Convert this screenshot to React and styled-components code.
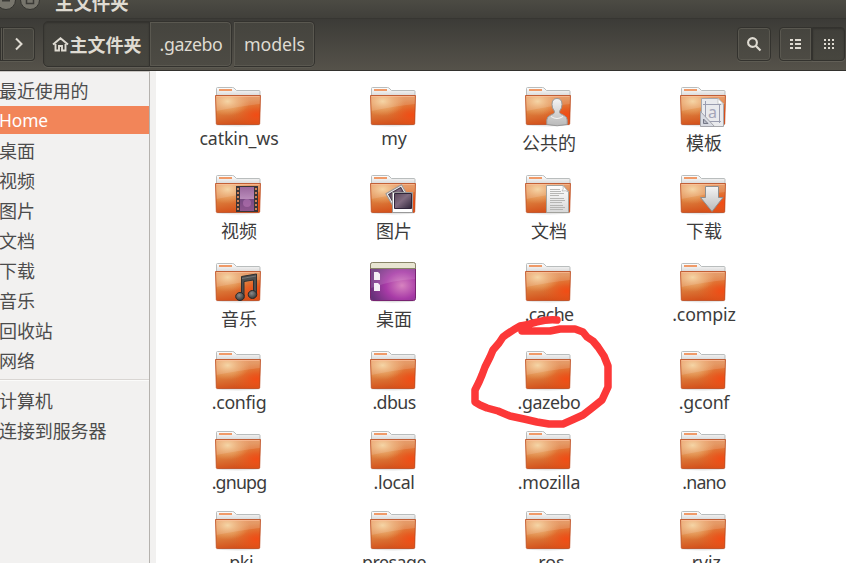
import React from 'react';
import styled, { createGlobalStyle, css } from 'styled-components';

const GlobalStyle = createGlobalStyle`
  * { box-sizing: border-box; }
  body {
    margin: 0;
    overflow: hidden;
    font-family: "Noto Sans", "Noto Sans CJK SC", sans-serif;
    font-size: 18px;
    color: #3c3c3c;
  }
`;

const Window = styled.div`
  position: relative;
  display: flex;
  flex-direction: column;
  width: 846px;
  height: 563px;
  overflow: hidden;
  background: #fff;
`;

const TitleBar = styled.header`
  display: flex;
  align-items: flex-end;
  flex: none;
  height: 18px;
  background: linear-gradient(#4c4b44, #403f3a);
`;

const WindowControls = styled.svg`
  display: block;
  flex: none;
  width: 55px;
  height: 18px;
`;

const Title = styled.h1`
  margin: 0 0 4px;
  font: bold 18.4px/24px "Noto Sans CJK SC", sans-serif;
  color: #dfdbd2;
`;

const Toolbar = styled.nav`
  display: flex;
  align-items: center;
  flex: none;
  height: 53px;
  padding: 0 1px 2px 0;
  background: linear-gradient(#3c3b37, #55524a);
  border-top: 1px solid #373632;
  border-bottom: 1px solid #33322e;
`;

const buttonFace = css`
  display: flex;
  align-items: center;
  justify-content: center;
  border: 1px solid #33322e;
  color: #dfdbd2;
  background: ${(p) => (p.$pressed ? 'linear-gradient(#403f3a, #47463f)' : 'linear-gradient(#45443e, #4d4b44)')};
  box-shadow: ${(p) =>
    p.$pressed ? 'inset 0 1px 2px rgba(0,0,0,.22), 0 1px 0 #625f57' : 'inset 0 0 0 1px #5a5850, 0 1px 0 #5d5b52'};
`;

const ToolButton = styled.button`
  ${buttonFace}
  flex: none;
  width: ${(p) => p.$width}px;
  height: 34px;
  padding: 0;
  border-radius: ${(p) => p.$radius || '4px'};
  border-left-width: ${(p) => (p.$joined ? 0 : 1)}px;
`;

const Breadcrumbs = styled.div`
  display: flex;
  flex: 1;
  margin-left: 8px;
`;

const Crumb = styled.button`
  ${buttonFace}
  gap: 1px;
  width: ${(p) => p.$width}px;
  height: 46px;
  margin-right: ${(p) => p.$gap || 0}px;
  padding: 1px 0 0 ${(p) => (p.$pressed ? 0 : 1)}px;
  border-radius: ${(p) => p.$radius};
  border-left-width: ${(p) => (p.$joined ? 0 : 1)}px;
  font-family: "Noto Sans", "Noto Sans CJK SC", sans-serif;
  font-size: ${(p) => (p.$pressed ? 18 : 17.8)}px;
  font-weight: ${(p) => (p.$pressed ? 700 : 400)};
  letter-spacing: ${(p) => p.$spacing || 0}px;
`;

const ViewSwitch = styled.div`
  display: flex;
  margin-left: 8px;
`;

const Body = styled.div`
  display: flex;
  flex: 1;
  min-height: 0;
`;

const Sidebar = styled.aside`
  flex: none;
  width: 150px;
  padding-top: 4px;
  background: #f2f1f0;
  border-top: 1px solid #c9c6c2;
  border-right: 1px solid #b5b2ae;
`;

const Place = styled.div`
  height: ${(p) => (p.$selected ? 28 : 30)}px;
  margin-bottom: ${(p) => (p.$selected ? 2 : 0)}px;
  line-height: ${(p) => (p.$selected ? 28 : 30)}px;
  font-size: ${(p) => (p.$selected ? 17.4 : 18)}px;
  letter-spacing: -0.1px;
  text-indent: -1px;
  color: ${(p) => (p.$selected ? '#fff' : '#4c4c4c')};
  background: ${(p) => (p.$selected ? '#f28559' : 'none')};
  white-space: nowrap;
`;

const Divider = styled.hr`
  height: 2px;
  margin: 3px 0 5px;
  border: 0;
  border-top: 1px solid #d9d6d3;
  border-bottom: 1px solid #fbfbfa;
`;

const Gutter = styled.div`
  flex: none;
  width: 6px;
  background: #f2f1f0;
`;

const Files = styled.main`
  display: grid;
  grid-template-columns: repeat(4, 155px);
  grid-template-rows: 88px 88px 88px 80px 80px 80px;
  padding: 15px 0 0 5px;
  overflow: hidden;
`;

const FileItem = styled.figure`
  display: flex;
  flex-direction: column;
  align-items: center;
  margin: 0;
`;

const FileLabel = styled.figcaption`
  height: 26px;
  margin-top: ${(p) => (p.$cjk ? 2 : -3)}px;
  padding-left: 1px;
  font-size: ${(p) => (p.$cjk ? 18 : 17.8)}px;
  line-height: 26px;
  letter-spacing: ${(p) => p.$spacing || 0}px;
  white-space: nowrap;
`;

const FolderSvg = styled.svg`
  display: block;
  flex: none;
  width: 47px;
  height: 42px;
  overflow: visible;
`;

const Glyph = styled.svg`
  display: block;
  flex: none;
`;

const Annotation = styled.svg`
  position: absolute;
  left: 0;
  top: 0;
  pointer-events: none;
`;

const Gradients = () => (
  <Annotation width="0" height="0">
    <defs>
      <linearGradient id="front" x1="0.3" y1="0" x2="0.5" y2="1">
        <stop offset="0" stopColor="#e5915c" />
        <stop offset="0.5" stopColor="#dd8240" />
        <stop offset="1" stopColor="#d34d18" />
      </linearGradient>
      <radialGradient id="hot" cx="0.92" cy="0.68" r="0.55">
        <stop offset="0" stopColor="#f24c14" />
        <stop offset="0.3" stopColor="#ec5018" stopOpacity="0.75" />
        <stop offset="1" stopColor="#e55c1c" stopOpacity="0" />
      </radialGradient>
      <radialGradient id="glow" cx="0.27" cy="0.2" r="0.5">
        <stop offset="0" stopColor="#f4d09a" />
        <stop offset="1" stopColor="#efa868" stopOpacity="0" />
      </radialGradient>
      <linearGradient id="paper" x1="0" y1="0" x2="0" y2="1">
        <stop offset="0" stopColor="#fff" />
        <stop offset="1" stopColor="#d8d8d8" />
      </linearGradient>
      <linearGradient id="silver" x1="0" y1="0" x2="0" y2="1">
        <stop offset="0" stopColor="#f4f4f4" />
        <stop offset="1" stopColor="#b9b9b9" />
      </linearGradient>
      <linearGradient id="photo" x1="0" y1="0" x2="1" y2="1">
        <stop offset="0" stopColor="#5a4658" />
        <stop offset="0.45" stopColor="#806b80" />
        <stop offset="1" stopColor="#30263b" />
      </linearGradient>
      <linearGradient id="film" x1="0" y1="0" x2="0" y2="1">
        <stop offset="0" stopColor="#9b679d" />
        <stop offset="0.48" stopColor="#b88bb9" />
        <stop offset="0.52" stopColor="#794a83" />
        <stop offset="1" stopColor="#90568f" />
      </linearGradient>
      <radialGradient id="desk" cx="0.7" cy="0.6" r="0.72">
        <stop offset="0" stopColor="#d783c0" />
        <stop offset="0.5" stopColor="#a83ba7" />
        <stop offset="1" stopColor="#673179" />
      </radialGradient>
      <radialGradient id="note" cx="0.4" cy="0.35" r="0.7">
        <stop offset="0" stopColor="#8a8a8a" />
        <stop offset="1" stopColor="#333" />
      </radialGradient>
    </defs>
  </Annotation>
);

const emblems = {
  person: (
    <g fill="url(#silver)" stroke="#999" strokeWidth="1">
      <path d="M21.800 38.500V34q0-3.500 4-5l3-1.500q1-.8.500-2.500-2.300-3-2.300-6.500 0-6 5-6t5 6q0 3.500-2.300 6.500-.5 1.700.5 2.500l3 1.500q4 1.500 4 5v4.500q-10 2.500-20.400 0Z" />
      <path d="M26 30.500q6 4 12 0" fill="none" stroke="#f5f5f5" />
    </g>
  ),
  template: (
    <g>
      <path d="M21.500 12.500H38l5.500 5.500v22.500h-22Z" fill="#e9eaed" stroke="#a7a8ac" />
      <path d="M38 12.500v5.500h5.500Z" fill="#fff" stroke="#bbb" strokeWidth=".7" />
      <path d="M25.500 15v22M39.500 18v19M23 18.500h18M23 35.500h18" stroke="#9a9db0" fill="none" />
      <text x="28" y="32" fontFamily="Noto Sans" fontSize="16" fill="#a4a6b9">a</text>
      <path d="M20.500 25.500v15h14Z" fill="#d8dbe3" stroke="#a3a4ab" />
      <path d="M23.500 33v4.500h4.500Z" fill="#b7bac7" stroke="#747887" />
    </g>
  ),
  film: (
    <g>
      <path d="M21 12h22v26H21Z" fill="#3b3537" />
      <path d="M25 13h14v24H25Z" fill="url(#film)" />
      <path d="M23 14v23M41 14v23" stroke="#cf8158" strokeWidth="2" strokeDasharray="2 2" />
      <circle cx="32" cy="29" r="4" fill="#d18acb" opacity=".4" />
    </g>
  ),
  photos: (
    <g>
      <g transform="rotate(-30 27 22)">
        <path d="M18.500 14.500h18v19h-18Z" fill="#f3f3f3" stroke="#999" />
        <path d="M20.500 16.500h14v13h-14Z" fill="url(#photo)" stroke="#46394a" />
      </g>
      <path d="M22.500 18.500h20v20h-20Z" fill="#fff" stroke="#999" />
      <path d="M24.500 19.500h17v15h-17Z" fill="url(#photo)" stroke="#30263b" />
    </g>
  ),
  document: (
    <g>
      <path d="M21.500 11.500h16.500l5.500 6v21h-22Z" fill="url(#paper)" stroke="#a2a29d" />
      <path d="M38 11.500q1 4-1 5.500 4-1 6.500 1Z" fill="#fff" stroke="#aaa" strokeWidth=".7" />
      <path d="M25 15.500h10M25 17.500h11M25 19.500h14M25 21.500h9M25 24.500h14M25 26.500h15M25 28.500h12M25 31.500h13M25 33.500h15M25 35.500h13" stroke="#b0b0ae" strokeWidth=".9" />
    </g>
  ),
  download: (
    <path d="M25.500 12.500h13v11h4.500L32 37.500 20.500 23.500h5Z" fill="url(#silver)" stroke="#8e8e8e" strokeLinejoin="round" />
  ),
  music: (
    <g>
      <path d="M26.500 14.500l15-2.500v19h-3V18l-9.500 1.500V34h-2.500Z" fill="#4f4f4f" stroke="#303030" />
      <ellipse cx="25" cy="34.500" rx="4.300" ry="4" fill="url(#note)" stroke="#292929" />
      <ellipse cx="37.500" cy="32.500" rx="4.300" ry="4" fill="url(#note)" stroke="#292929" />
      <path d="M27 16.500l14-2.500" stroke="#777" />
    </g>
  ),
};

const FolderIcon = ({ emblem }) => (
  <FolderSvg viewBox="0 0 47 42" aria-hidden="true">
    <ellipse cx="23" cy="39" rx="22" ry="1.400" fill="#000" opacity=".1" />
    <path d="M1.500 10V2.500q0-1 1-1h15q1.500 0 2.500 1.500l1.500 1.500H44q1 0 1 1V10Z" fill="url(#paper)" stroke="#b9bdbd" />
    <path d="M4 3h13v2H4Z" fill="#f09a68" />
    <path d="M.5 9.500h45l-.8 28.200q0 .8-1 .8H2.300q-1 0-1-.8Z" fill="url(#front)" />
    <path d="M.5 9.500h45l-.8 28.200q0 .8-1 .8H2.300q-1 0-1-.8Z" fill="url(#hot)" />
    <path d="M.5 9.500h45l-.8 28.200q0 .8-1 .8H2.300q-1 0-1-.8Z" fill="url(#glow)" />
    <path d="M1 10h44v8Q25 20 1.500 25Z" fill="#fff" opacity=".13" />
    <path d="M1.500 10.500h43" stroke="#ffc5a0" opacity=".6" />
    <path d="M.5 9.500h45l-.8 28.200q0 .8-1 .8H2.300q-1 0-1-.8Z" fill="none" stroke="#b84418" opacity=".75" />
    {emblem && emblems[emblem]}
  </FolderSvg>
);

const DesktopIcon = () => (
  <FolderSvg viewBox="0 0 47 42" aria-hidden="true">
    <ellipse cx="23" cy="39" rx="22" ry="1.400" fill="#000" opacity=".12" />
    <rect x=".5" y="1" width="45" height="37.500" rx="2" fill="url(#desk)" stroke="#782371" />
    <path d="M1 7h44v10Q22 18 1 26Z" fill="#fff" opacity=".12" />
    <path d="M.5 6.500V2.500q0-2 2-2h41q2 0 2 2v4Z" fill="#e8e5d2" stroke="#888567" />
    <path d="M4 10h4l2 2v6H4ZM4 21h4l2 2v6H4Z" fill="#f4edf4" />
  </FolderSvg>
);

const places = ['最近使用的', 'Home', '桌面', '视频', '图片', '文档', '下载', '音乐', '回收站', '网络'];
const devices = ['计算机', '连接到服务器'];

const files = [
  { name: 'catkin_ws', spacing: -0.15 },
  { name: 'my', spacing: -0.2 },
  { name: '公共的', cjk: true, emblem: 'person' },
  { name: '模板', cjk: true, emblem: 'template' },
  { name: '视频', cjk: true, emblem: 'film' },
  { name: '图片', cjk: true, emblem: 'photos' },
  { name: '文档', cjk: true, emblem: 'document' },
  { name: '下载', cjk: true, emblem: 'download' },
  { name: '音乐', cjk: true, emblem: 'music' },
  { name: '桌面', cjk: true, desktop: true },
  { name: '.cache', spacing: -0.7 },
  { name: '.compiz', spacing: -0.15 },
  { name: '.config', spacing: -0.3 },
  { name: '.dbus', spacing: -0.6 },
  { name: '.gazebo', spacing: -0.4 },
  { name: '.gconf', spacing: -0.3 },
  { name: '.gnupg', spacing: -0.8 },
  { name: '.local', spacing: -0.4 },
  { name: '.mozilla', spacing: -0.2 },
  { name: '.nano', spacing: -0.8 },
  { name: '.pki', spacing: -0.3 },
  { name: 'presage', spacing: -0.5 },
  { name: '.ros', spacing: -0.1 },
  { name: '.rviz', spacing: -0.1 },
];

export default function App() {
  return (
    <Window>
      <GlobalStyle />
      <Gradients />
      <TitleBar>
        <WindowControls viewBox="0 0 55 18">
          <circle cx="6" cy="0" r="9.500" fill="#77756c" stroke="#34332f" />
          <path d="M2 0.500h8" stroke="#3b3a36" strokeWidth="2" />
          <circle cx="30" cy="0" r="9.500" fill="#77756c" stroke="#34332f" />
          <path d="M26.500-3.500h7v7h-7Z" fill="none" stroke="#3b3a36" strokeWidth="1.500" />
        </WindowControls>
        <Title>主文件夹</Title>
      </TitleBar>
      <Toolbar>
        <ToolButton $width={3} $radius="0" aria-label="后退" />
        <ToolButton $width={32} $radius="0 4px 4px 0" $joined aria-label="前进">
          <Glyph width="10" height="14" viewBox="0 0 10 14">
            <path d="M2 1.500l5.500 5.500L2 12.500" fill="none" stroke="#dfdbd2" strokeWidth="2" />
          </Glyph>
        </ToolButton>
        <Breadcrumbs>
          <Crumb $width={107} $radius="5px 0 0 5px" $pressed>
            <Glyph width="17" height="15" viewBox="0 0 17 15">
              <path d="M1 7.500L8.500 1.200 16 7.500M3.500 7v6.500h3.500V9h3v4.500h3.500V7" fill="none" stroke="#dfdbd2" strokeWidth="1.900" />
            </Glyph>
            主文件夹
          </Crumb>
          <Crumb $width={82} $radius="0 5px 5px 0" $gap={2} $joined $spacing={-0.4}>.gazebo</Crumb>
          <Crumb $width={81} $radius="0 5px 5px 0" $joined $spacing={-0.1}>models</Crumb>
        </Breadcrumbs>
        <ToolButton $width={34} aria-label="搜索">
          <Glyph width="16" height="16" viewBox="0 0 16 16">
            <circle cx="6.500" cy="6.500" r="4.400" fill="none" stroke="#dfdbd2" strokeWidth="2.100" />
            <path d="M9.500 9.500l5 5" stroke="#dfdbd2" strokeWidth="2.200" />
          </Glyph>
        </ToolButton>
        <ViewSwitch>
          <ToolButton $width={33} $radius="4px 0 0 4px" aria-label="列表">
            <Glyph width="12" height="10" viewBox="0 0 12 10">
              <path d="M0 0h3v2H0zM5 0h6v2H5zM0 4h3v2H0zM5 4h6v2H5zM0 8h3v2H0zM5 8h6v2H5z" fill="#dfdbd2" />
            </Glyph>
          </ToolButton>
          <ToolButton $width={33} $radius="0 4px 4px 0" $pressed aria-label="图标">
            <Glyph width="10" height="10" viewBox="0 0 10 10">
              <path d="M0 0h2v2H0zM4 0h2v2H4zM8 0h2v2H8zM0 4h2v2H0zM4 4h2v2H4zM8 4h2v2H8zM0 8h2v2H0zM4 8h2v2H4zM8 8h2v2H8z" fill="#dfdbd2" />
            </Glyph>
          </ToolButton>
        </ViewSwitch>
      </Toolbar>
      <Body>
        <Sidebar>
          {places.map((name) => (
            <Place key={name} $selected={name === 'Home'}>{name}</Place>
          ))}
          <Divider />
          {devices.map((name) => (
            <Place key={name}>{name}</Place>
          ))}
        </Sidebar>
        <Gutter />
        <Files>
          {files.map((file) => (
            <FileItem key={file.name}>
              {file.desktop ? <DesktopIcon /> : <FolderIcon emblem={file.emblem} />}
              <FileLabel $cjk={file.cjk} $spacing={file.spacing}>{file.name}</FileLabel>
            </FileItem>
          ))}
        </Files>
      </Body>
      <Annotation width="846" height="563" viewBox="0 0 846 563">
        <path
          d="M557 320Q548 319 537 322T520 326Q511 331 503 337L499 343L493 350L490 357L485 367L482 375L479 382L475 390V402L480 405L487 408L498 411L510 416L524 419L537 422L549 424H563L572 420L583 415L592 408L602 400L608 387V366L604 356L598 347L593 341L587 337L583 332L575 329H560L550 331H522"
          fill="none"
          stroke="#fc3838"
          strokeWidth="7.500"
          strokeLinecap="round"
          strokeLinejoin="round"
        />
      </Annotation>
    </Window>
  );
}
